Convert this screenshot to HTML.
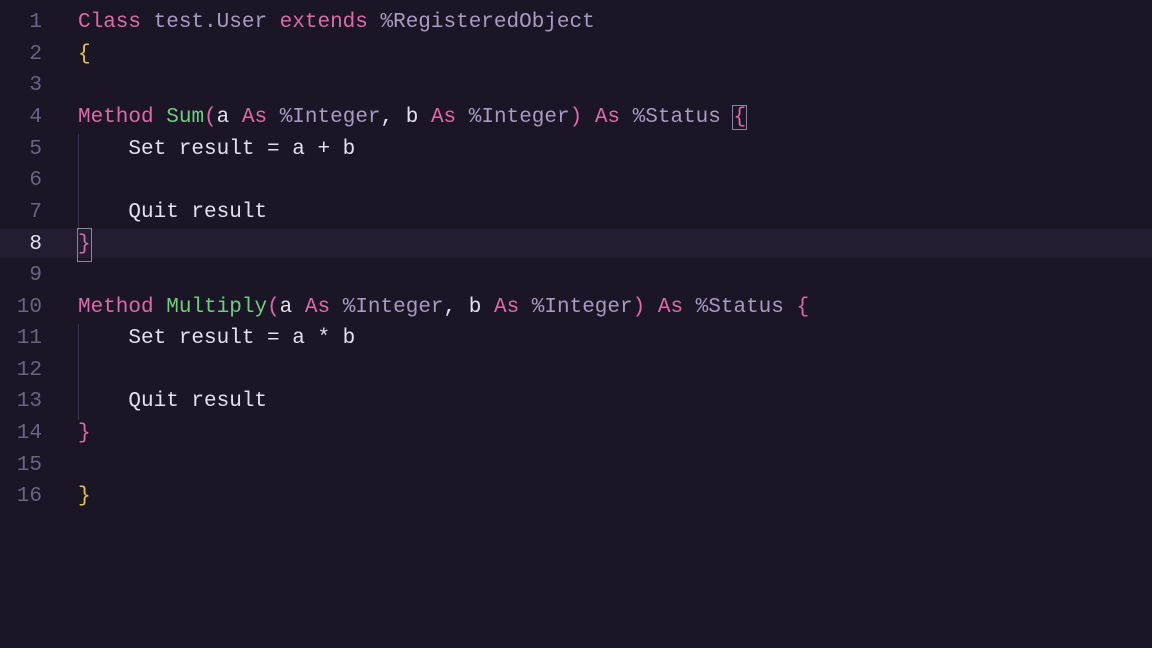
<!DOCTYPE html><html><head><style>
body{margin:0;width:1152px;height:648px;background:#1b1626;overflow:hidden;font-family:"Liberation Mono",monospace;font-size:21px;}
.l{position:absolute;left:0;height:31.6px;line-height:31.6px;white-space:pre;color:#e4dfec}
.n{position:absolute;left:0;width:42px;text-align:right;color:#6a6383}
.c{position:absolute;left:78px}
.k{color:#dc6aa8}.t{color:#a69bc2}.g{color:#6fcd7f}.y{color:#e9c440}.w{color:#e4dfec}
.hl{position:absolute;left:0;width:1152px;top:229px;height:29px;background:#221d30}
.guide{position:absolute;left:78px;width:1px;background:#3a3450}
</style></head><body>
<div class="hl"></div>
<div class="guide" style="top:134px;height:96px"></div>
<div class="guide" style="top:324px;height:96px"></div>
<div class="l" style="top:7px"><span class="n">1</span><span class="c"><span class="k">Class</span> <span class="t">test.User</span> <span class="k">extends</span> <span class="t">%RegisteredObject</span></span></div>
<div class="l" style="top:39px"><span class="n">2</span><span class="c y">{</span></div>
<div class="l" style="top:70px"><span class="n">3</span></div>
<div class="l" style="top:102px"><span class="n">4</span><span class="c"><span class="k">Method</span> <span class="g">Sum</span><span class="k">(</span>a <span class="k">As</span> <span class="t">%Integer</span>, b <span class="k">As</span> <span class="t">%Integer</span><span class="k">)</span> <span class="k">As</span> <span class="t">%Status</span> <span class="k" style="outline:1px solid #8a86a0">{</span></span></div>
<div class="l" style="top:134px"><span class="n">5</span><span class="c">    Set result = a + b</span></div>
<div class="l" style="top:165px"><span class="n">6</span></div>
<div class="l" style="top:197px"><span class="n">7</span><span class="c">    Quit result</span></div>
<div class="l" style="top:229px"><span class="n" style="color:#e4dfec">8</span><span class="c k" style="outline:1px solid #8a86a0">}</span></div>
<div class="l" style="top:260px"><span class="n">9</span></div>
<div class="l" style="top:292px"><span class="n">10</span><span class="c"><span class="k">Method</span> <span class="g">Multiply</span><span class="k">(</span>a <span class="k">As</span> <span class="t">%Integer</span>, b <span class="k">As</span> <span class="t">%Integer</span><span class="k">)</span> <span class="k">As</span> <span class="t">%Status</span> <span class="k">{</span></span></div>
<div class="l" style="top:323px"><span class="n">11</span><span class="c">    Set result = a * b</span></div>
<div class="l" style="top:355px"><span class="n">12</span></div>
<div class="l" style="top:386px"><span class="n">13</span><span class="c">    Quit result</span></div>
<div class="l" style="top:418px"><span class="n">14</span><span class="c k">}</span></div>
<div class="l" style="top:450px"><span class="n">15</span></div>
<div class="l" style="top:481px"><span class="n">16</span><span class="c y">}</span></div>
</body></html>
